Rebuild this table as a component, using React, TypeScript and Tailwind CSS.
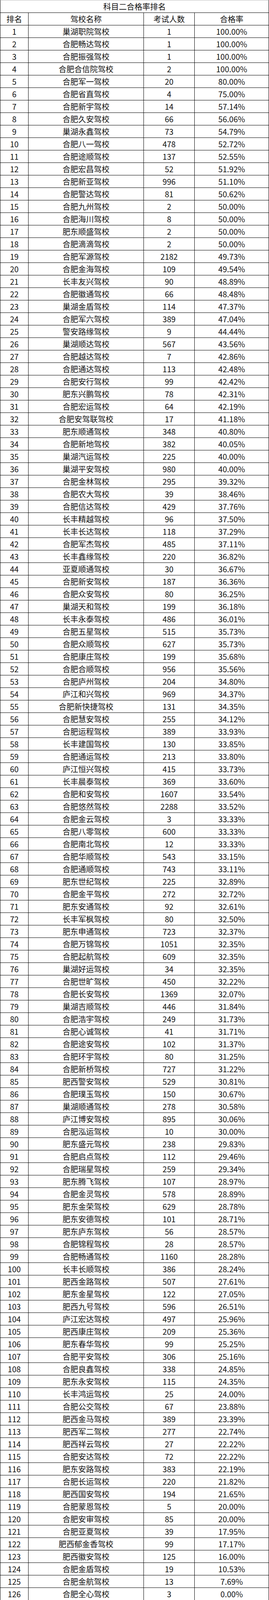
const raw = `巢湖职院驾校 1 100.00%
合肥畅达驾校 1 100.00%
合肥振强驾校 1 100.00%
合肥合信院驾校 2 100.00%
合肥军一驾校 20 80.00%
合肥省直驾校 4 75.00%
合肥新宇驾校 14 57.14%
合肥久安驾校 66 56.06%
巢湖永鑫驾校 73 54.79%
合肥八一驾校 478 52.72%
合肥途顺驾校 137 52.55%
合肥宏昌驾校 52 51.92%
合肥新亚驾校 996 51.10%
合肥警达驾校 81 50.62%
合肥九州驾校 2 50.00%
合肥海川驾校 8 50.00%
肥东顺盛驾校 2 50.00%
合肥滴滴驾校 2 50.00%
合肥军源驾校 2182 49.73%
合肥金海驾校 109 49.54%
长丰友兴驾校 90 48.89%
合肥徽通驾校 66 48.48%
巢湖金盾驾校 114 47.37%
合肥军六驾校 389 47.04%
警安路缘驾校 9 44.44%
巢湖顺达驾校 567 43.56%
合肥越达驾校 7 42.86%
合肥通达驾校 113 42.48%
合肥安行驾校 99 42.42%
肥东兴鹏驾校 78 42.31%
合肥宏运驾校 64 42.19%
合肥安驾联驾校 17 41.18%
肥东顺通驾校 348 40.80%
合肥新地驾校 382 40.05%
巢湖汽运驾校 225 40.00%
巢湖平安驾校 980 40.00%
合肥金林驾校 295 39.32%
合肥农大驾校 39 38.46%
合肥信达驾校 429 37.76%
长丰精越驾校 96 37.50%
长丰长达驾校 118 37.29%
合肥军杰驾校 485 37.11%
长丰鑫缘驾校 220 36.82%
亚夏顺通驾校 30 36.67%
合肥新安驾校 187 36.36%
合肥众安驾校 80 36.25%
巢湖天和驾校 199 36.18%
长丰永泰驾校 486 36.01%
合肥五星驾校 515 35.73%
合肥众顺驾校 627 35.73%
合肥康庄驾校 199 35.68%
合肥合顺驾校 956 35.56%
合肥庐州驾校 204 34.80%
庐江和兴驾校 969 34.37%
合肥新快捷驾校 131 34.35%
合肥慧安驾校 255 34.12%
合肥运程驾校 389 33.93%
长丰建国驾校 130 33.85%
合肥通运驾校 213 33.80%
庐江恒兴驾校 415 33.73%
长丰晨泰驾校 369 33.60%
合肥和安驾校 1607 33.54%
合肥悠然驾校 2288 33.52%
合肥金云驾校 3 33.33%
合肥八零驾校 600 33.33%
合肥南北驾校 12 33.33%
合肥华顺驾校 543 33.15%
合肥通顺驾校 743 33.11%
肥东世纪驾校 225 32.89%
合肥金平驾校 272 32.72%
肥东安通驾校 92 32.61%
长丰军枫驾校 80 32.50%
肥东申通驾校 723 32.37%
合肥万锦驾校 1051 32.35%
合肥起航驾校 609 32.35%
巢湖好运驾校 34 32.35%
合肥世旷驾校 450 32.22%
合肥长安驾校 1369 32.07%
巢湖吉顺驾校 446 31.84%
合肥浩宇驾校 249 31.73%
合肥心诚驾校 41 31.71%
合肥途安驾校 102 31.37%
合肥环宇驾校 80 31.25%
合肥新桥驾校 727 31.22%
肥西警安驾校 529 30.81%
合肥璞玉驾校 150 30.67%
巢湖顺通驾校 278 30.58%
庐江博安驾校 895 30.06%
合肥泓运驾校 10 30.00%
肥东盛元驾校 238 29.83%
合肥启点驾校 112 29.46%
合肥瑞星驾校 259 29.34%
肥东腾飞驾校 107 28.97%
合肥金灵驾校 578 28.89%
肥东金荣驾校 629 28.78%
肥东安德驾校 101 28.71%
肥东庐东驾校 56 28.57%
合肥锦程驾校 28 28.57%
合肥畅通驾校 1160 28.28%
长丰长顺驾校 386 28.24%
肥西金路驾校 507 27.61%
肥东金星驾校 122 27.05%
肥西九号驾校 596 26.51%
庐江宏达驾校 497 25.96%
肥西康庄驾校 209 25.36%
肥东春华驾校 99 25.25%
合肥平安驾校 306 25.16%
合肥良鑫驾校 338 24.85%
肥东永安驾校 115 24.35%
长丰鸿运驾校 25 24.00%
合肥公交驾校 67 23.88%
肥西金马驾校 389 23.39%
肥西军二驾校 277 22.74%
肥西祥云驾校 27 22.22%
合肥安达驾校 72 22.22%
肥东安路驾校 383 22.19%
合肥长运驾校 220 21.82%
肥西国安驾校 194 21.65%
合肥蒙恩驾校 5 20.00%
合肥安审驾校 85 20.00%
合肥亚夏驾校 39 17.95%
肥西郁金香驾校 99 17.17%
肥西徽安驾校 125 16.00%
合肥金盾驾校 19 10.53%
合肥金航驾校 13 7.69%
合肥全心驾校 3 0.00%`;

const rows = raw.split("\n").map((line) => line.split(" "));

function Row({ cells }: { cells: string[] }) {
  return (
    <div className="box-border flex h-[32px] overflow-hidden border-b border-black">
      <div className="box-border flex w-[72px] shrink-0 items-center justify-center border-r border-black">
        {cells[0]}
      </div>
      <div className="box-border flex w-[295px] shrink-0 items-center justify-center border-r border-black">
        {cells[1]}
      </div>
      <div className="box-border flex w-[130px] shrink-0 items-center justify-center border-r border-black">
        {cells[2]}
      </div>
      <div className="flex flex-1 items-center justify-center">{cells[3]}</div>
    </div>
  );
}

export default function App() {
  return (
    <div
      className="box-border w-[688px] border-x border-t border-black border-t-[#bbbbbb] bg-white text-[20px] leading-none text-[#111]"
      style={{ fontFamily: '"Noto Sans CJK SC", "Noto Sans", sans-serif' }}
    >
      <div className="box-border flex h-[32px] items-center justify-center border-b border-black">
        科目二合格率排名
      </div>
      <Row cells={["排名", "驾校名称", "考试人数", "合格率"]} />
      {rows.map((r, i) => (
        <Row key={i} cells={[String(i + 1), r[0], r[1], r[2]]} />
      ))}
    </div>
  );
}
